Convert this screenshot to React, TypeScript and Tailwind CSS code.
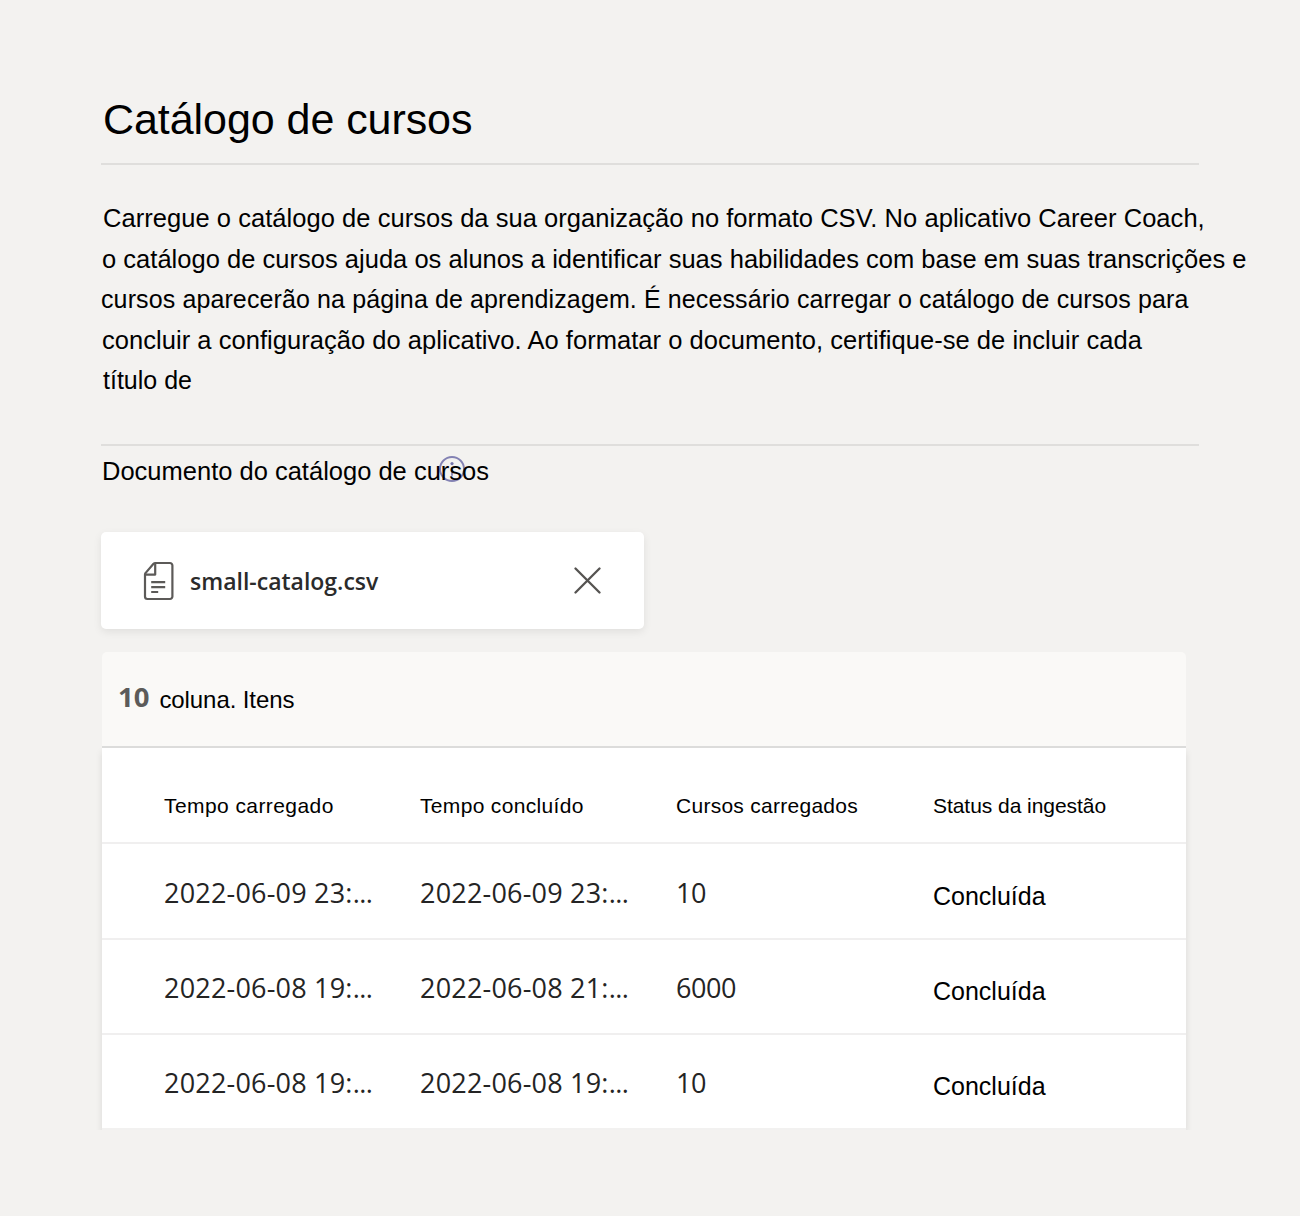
type Row = { loaded: string; finished: string; count: string; status: string };

const rows: Row[] = [
  { loaded: "2022-06-09 23:", finished: "2022-06-09 23:", count: "10", status: "Concluída" },
  { loaded: "2022-06-08 19:", finished: "2022-06-08 21:", count: "6000", status: "Concluída" },
  { loaded: "2022-06-08 19:", finished: "2022-06-08 19:", count: "10", status: "Concluída" },
];

const columns = "grid grid-cols-[256px_256px_257px_1fr] pl-[62px]";

function InfoIcon({ className }: { className: string }) {
  return (
    <svg className={className} viewBox="0 0 28 28" fill="none">
      <circle cx="14" cy="14" r="12" stroke="#8382b3" strokeWidth="1.9" />
      <circle cx="14" cy="8.6" r="1.6" fill="#7675ab" />
      <path d="M14 13v7" stroke="#8382b3" strokeWidth="1.8" strokeLinecap="round" />
    </svg>
  );
}

function FileIcon() {
  return (
    <svg className="h-[40px] w-[32px]" viewBox="0 0 32 40" fill="none" stroke="#5c5a58" strokeWidth="2.2" strokeLinejoin="round">
      <path d="M12.2 2H27a2.4 2.4 0 0 1 2.4 2.4v31.2A2.4 2.4 0 0 1 27 38H4.4A2.4 2.4 0 0 1 2 35.6V13.6a2.4 2.4 0 0 1 .7-1.7l7.800-9.200a2.400 2.400 0 0 1 1.700-.7Z" />
      <path d="M12.200 2.200v11.400H2.400" />
      <path d="M8.200 21.200h14M8.200 26.200h14M8.200 31h7" />
    </svg>
  );
}

function Truncated({ text }: { text: string }) {
  return (
    <span className="tracking-[0.2px]">
      {text}
      <span className="tracking-[-0.5px]">...</span>
    </span>
  );
}

export default function App() {
  return (
    <main className="h-[1216px] w-[1300px] overflow-hidden bg-[#f3f2f0] pl-[101px] pt-[90px] font-['Liberation_Sans',Arial,sans-serif] text-black">
      <header className="h-[75px] w-[1098px] border-b-2 border-[#dfdedc]">
        <h1 className="pl-[2px] text-[43px] leading-[58px] tracking-[-0.06px] whitespace-nowrap">Catálogo de cursos</h1>
      </header>

      <section className="h-[281px] w-[1098px] border-b-2 border-[#dfdedc] pt-[33px] text-[25.5px] leading-[40px] whitespace-nowrap">
        <p className="h-[41px] pl-[2px] tracking-[0.045px]">
          Carregue o catálogo de cursos da sua organização no formato CSV. No aplicativo Career Coach,
        </p>
        <p className="h-[40px] pl-px tracking-[0.02px]">
          o catálogo de cursos ajuda os alunos a identificar suas habilidades com base em suas transcrições e
        </p>
        <p className="h-[41px] text-[25px] tracking-[0.114px]">
          cursos aparecerão na página de aprendizagem. É necessário carregar o catálogo de cursos para
        </p>
        <p className="h-[39px] pl-px tracking-[0.04px]">
          concluir a configuração do aplicativo. Ao formatar o documento, certifique-se de incluir cada
        </p>
        <p className="pl-[2px] pt-px text-[25px]">título de</p>
      </section>

      <div className="relative h-[86px] w-fit pt-[5px]">
        <InfoIcon className="absolute left-[336.5px] top-[9px] size-[28px]" />
        <h2 className="relative pl-px text-[25.5px] leading-[40px] whitespace-nowrap">Documento do catálogo de cursos</h2>
      </div>

      <div className="flex h-[97px] w-[543px] items-center rounded-[5px] bg-white pl-[42px] pr-[43px] shadow-[0_3px_8px_rgba(0,0,0,0.08)]">
        <FileIcon />
        <span className="ml-[15px] pt-px font-['Open_Sans',sans-serif] text-[23px] leading-[32px] font-semibold text-[#2b2b2b]">
          small-catalog.csv
        </span>
        <svg className="ml-auto size-[27px]" viewBox="0 0 27 27" stroke="#555351" strokeWidth="2.3" strokeLinecap="round">
          <path d="M1.500 1.500l24 24M25.500 1.500l-24 24" />
        </svg>
      </div>

      <section className="mt-[23px] ml-px w-[1084px]">
        <div className="flex h-[96px] rounded-t-[5px] border-b-2 border-[#dcdcdb] bg-[#faf9f7] pl-[16px]">
          <span className="pt-[25px] font-['Open_Sans',sans-serif] text-[27.5px] leading-[40px] font-bold text-[#5c5b5a]">10</span>
          <span className="pl-[10px] pt-[28px] text-[24px] leading-[40px] tracking-[-0.09px]">coluna. Itens</span>
        </div>
        <div className="h-[382px] overflow-x-visible overflow-y-clip">
          <div className="h-[382px] border-b-2 border-[#f2f1f0] bg-white shadow-[0_4px_7px_rgba(0,0,0,0.10)]">
            <div className={`${columns} h-[96px] border-b-2 border-[#f0efef] pt-[38px] text-[21px] leading-[40px]`}>
              <span className="tracking-[0.42px]">Tempo carregado</span>
              <span className="tracking-[0.33px]">Tempo concluído</span>
              <span className="tracking-[0.27px]">Cursos carregados</span>
              <span className="tracking-[-0.05px]">Status da ingestão</span>
            </div>
            {rows.map((row, i) => (
              <div
                key={i}
                className={`${columns} border-[#f0efef] font-['Open_Sans',sans-serif] text-[27px] leading-[40px] text-[#242424] ${
                  i === 0 ? "h-[96px] border-b-2 pt-[29px]" : i === 1 ? "h-[95px] border-b-2 pt-[28px]" : "h-[93px] pt-[28px]"
                }`}
              >
                <Truncated text={row.loaded} />
                <Truncated text={row.finished} />
                <span className="tracking-[-0.4px]">{row.count}</span>
                <span className="pt-[3px] font-['Liberation_Sans',Arial,sans-serif] text-[25px] text-black">{row.status}</span>
              </div>
            ))}
          </div>
        </div>
      </section>
    </main>
  );
}
